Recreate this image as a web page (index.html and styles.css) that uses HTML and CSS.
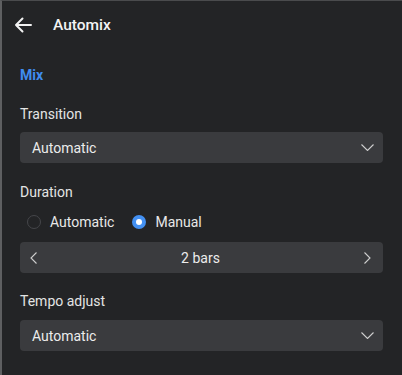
FILE: index.html
```html
<!DOCTYPE html>
<html>
<head>
<meta charset="utf-8">
<link rel="stylesheet" href="styles.css">
</head>
<body>
<div class="frame">
  <header class="topbar">
    <svg class="back" width="18" height="16" viewBox="0 0 18 16"><path d="M17 8H2M8.5 1.5L2 8l6.5 6.5" fill="none" stroke="#f2f2f2" stroke-width="2" stroke-linecap="round" stroke-linejoin="round"/></svg>
    <span class="title">Automix</span>
  </header>
  <main class="content">
    <div class="section">Mix</div>

    <div class="label l-transition">Transition</div>
    <div class="select">
      <span>Automatic</span>
      <svg width="13" height="7" viewBox="0 0 13 7"><path d="M0.5 0.5l6 6 6-6" fill="none" stroke="#cfcfcf" stroke-width="1.1"/></svg>
    </div>

    <div class="label l-duration">Duration</div>
    <div class="radios">
      <label class="radio"><span class="dot off"></span>Automatic</label>
      <label class="radio"><span class="dot on"></span>Manual</label>
    </div>
    <div class="stepper">
      <svg width="7" height="12" viewBox="0 0 7 12"><path d="M6.5 0.5L1 6l5.5 5.5" fill="none" stroke="#cfcfcf" stroke-width="1.1"/></svg>
      <span>2 bars</span>
      <svg width="7" height="12" viewBox="0 0 7 12"><path d="M0.5 0.5L6 6l-5.5 5.5" fill="none" stroke="#cfcfcf" stroke-width="1.1"/></svg>
    </div>

    <div class="label l-tempo">Tempo adjust</div>
    <div class="select">
      <span>Automatic</span>
      <svg width="13" height="7" viewBox="0 0 13 7"><path d="M0.5 0.5l6 6 6-6" fill="none" stroke="#cfcfcf" stroke-width="1.1"/></svg>
    </div>
  </main>
</div>
</body>
</html>
```
FILE: styles.css
```css
* { box-sizing: border-box; }
html, body {
  margin: 0;
  padding: 0;
  background: #232426;
}
body {
  font-family: Roboto, "Noto Sans", sans-serif;
  color: #e8e8e8;
}
.frame {
  width: 402px;
  height: 375px;
  border-left: 2px solid #5e5f61;
  border-top: 1px solid #4a4b4d;
  background: #232426;
  overflow: hidden;
}
.topbar {
  height: 47px;
  display: flex;
  align-items: center;
  padding-left: 12px;
}
.back { display: block; }
.title {
  margin-left: 21px;
  font-size: 15.5px;
  font-weight: 500;
  color: #f4f4f4;
  line-height: 20px;
}
.content {
  padding: 0 19px 0 18px;
}
.section {
  margin-top: 17px;
  line-height: 20px;
  font-size: 14px;
  font-weight: 700;
  color: #3f8cf0;
}
.label {
  line-height: 20px;
  font-size: 14px;
  color: #e4e4e4;
}
.l-transition { margin-top: 19px; }
.l-duration { margin-top: 19px; }
.l-tempo { margin-top: 18px; }
.select, .stepper {
  height: 31px;
  background: #3a3b3e;
  border-radius: 4px;
  display: flex;
  align-items: center;
  font-size: 14px;
  color: #ececec;
}
.select {
  margin-top: 8px;
  justify-content: space-between;
  padding: 0 9px 0 12px;
}
.select svg { display: block; }
.l-tempo + .select { margin-top: 9px; }
.radios {
  margin-top: 8px;
  height: 24px;
  display: flex;
  align-items: center;
  padding-left: 7px;
  gap: 18px;
  font-size: 14px;
}
.radio {
  display: flex;
  align-items: center;
  gap: 9px;
  color: #e8e8e8;
}
.dot {
  width: 14px;
  height: 14px;
  border-radius: 50%;
  display: block;
}
.dot.off { border: 1.5px solid #45464a; }
.dot.on {
  background: #4390f2;
  position: relative;
}
.dot.on::after {
  content: "";
  position: absolute;
  left: 4px;
  top: 4px;
  width: 6px;
  height: 6px;
  border-radius: 50%;
  background: #fff;
}
.stepper {
  margin-top: 8px;
  justify-content: space-between;
  padding: 0 12px 0 10px;
}
.stepper svg { display: block; }
```
